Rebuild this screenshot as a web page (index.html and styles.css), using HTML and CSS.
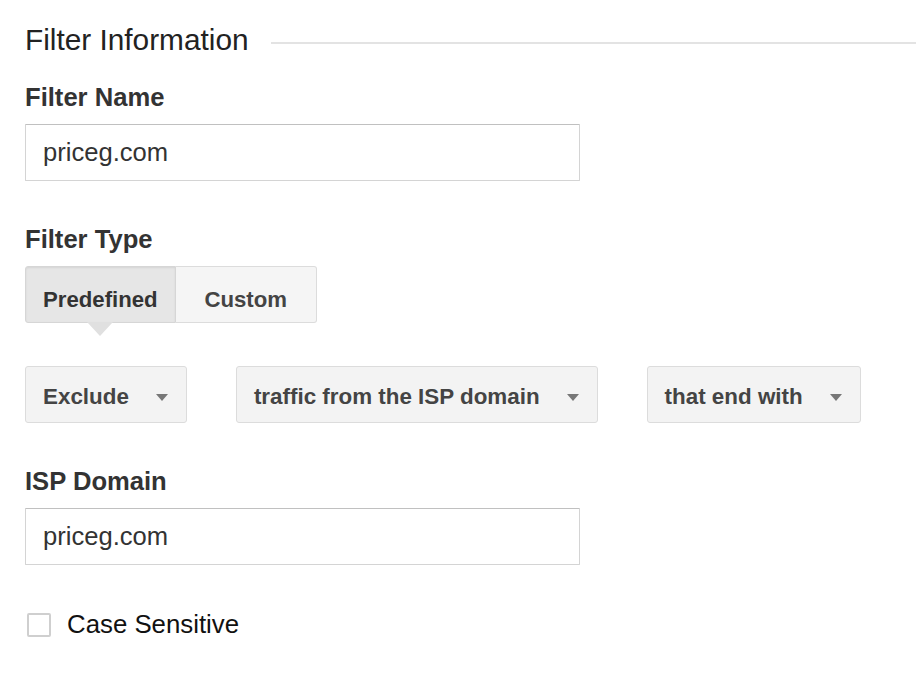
FILE: index.html
```html
<!DOCTYPE html>
<html lang="en">
<head>
    <meta charset="UTF-8">
    <meta name="viewport" content="width=device-width, initial-scale=1.0">
    <title>Filter Information</title>
    <link rel="stylesheet" href="styles.css">
</head>
<body>

    <div class="filter-form">
        <div class="section-head">
            <h1>Filter Information</h1>
            <span class="rule"></span>
        </div>

        <label class="field-label" for="filter-name">Filter Name</label>
        <input class="text-input" type="text" id="filter-name" value="priceg.com">

        <label class="field-label label-gap">Filter Type</label>
        <div class="segmented">
            <button class="seg-btn active">Predefined</button>
            <button class="seg-btn">Custom</button>
        </div>

        <div class="dropdowns">
            <button class="dropdown">Exclude <span class="caret"></span></button>
            <button class="dropdown">traffic from the ISP domain <span class="caret"></span></button>
            <button class="dropdown">that end with <span class="caret"></span></button>
        </div>

        <label class="field-label label-gap" for="isp-domain">ISP Domain</label>
        <input class="text-input" type="text" id="isp-domain" value="priceg.com">

        <label class="check-row">
            <input type="checkbox" class="check">
            Case Sensitive
        </label>
    </div>

</body>
</html>
```

FILE: styles.css
```css
body {
    font-family: "Liberation Sans", Arial, Helvetica, sans-serif;
    margin: 0;
    padding: 22px 0 0 25px;
    background-color: #fff;
    color: #333;
}
.filter-form {
    display: flex;
    flex-direction: column;
    align-items: flex-start;
}
.section-head {
    display: flex;
    align-items: center;
    align-self: stretch;
    height: 36px;
}
.section-head h1 {
    margin: 0;
    font-size: 29.8px;
    font-weight: normal;
    line-height: 36px;
    color: #222;
}
.rule {
    flex: 1;
    height: 2px;
    margin: 6px 0 0 22px;
    background-color: #e3e3e3;
}
.field-label {
    display: block;
    margin-top: 25px;
    font-size: 25.6px;
    font-weight: bold;
    line-height: 28px;
    color: #333;
}
.label-gap {
    margin-top: 44px;
}
.text-input {
    box-sizing: border-box;
    width: 555px;
    height: 57px;
    margin: 13px 0 0;
    padding: 0 17px;
    font-family: inherit;
    font-size: 25.6px;
    color: #333;
    border: 1px solid #d4d4d4;
    border-top-color: #c0c0c0;
    border-radius: 1px;
    outline: none;
}
.segmented {
    display: flex;
    margin-top: 13px;
}
.seg-btn {
    position: relative;
    box-sizing: border-box;
    height: 57px;
    min-width: 141px;
    padding: 10px 17px 0;
    font-family: inherit;
    font-size: 22.2px;
    font-weight: bold;
    color: #444;
    background-color: #f5f5f5;
    border: 1px solid #dcdcdc;
    cursor: pointer;
}
.seg-btn:first-child {
    border-radius: 3px 0 0 3px;
}
.seg-btn:last-child {
    border-left: none;
    border-radius: 0 3px 3px 0;
}
.seg-btn.active {
    color: #333;
    background-color: #e6e6e6;
    border-color: #d6d6d6;
    box-shadow: inset 0 1px 2px rgba(0, 0, 0, 0.08);
}
.seg-btn.active::after {
    content: "";
    position: absolute;
    left: 50%;
    bottom: -14px;
    margin-left: -13px;
    border-left: 13px solid transparent;
    border-right: 13px solid transparent;
    border-top: 14px solid #e0e0e0;
}
.dropdowns {
    display: flex;
    gap: 49px;
    margin-top: 43px;
}
.dropdown {
    display: flex;
    align-items: center;
    box-sizing: border-box;
    height: 57px;
    padding: 4px 18px 0 17px;
    font-family: inherit;
    font-size: 22.4px;
    font-weight: bold;
    color: #444;
    background-color: #f3f3f3;
    border: 1px solid #dcdcdc;
    border-radius: 3px;
    cursor: pointer;
}
.caret {
    width: 0;
    height: 0;
    margin-left: 27px;
    margin-top: 1px;
    border-left: 6px solid transparent;
    border-right: 6px solid transparent;
    border-top: 7px solid #777;
}
.check-row {
    display: flex;
    align-items: center;
    margin-top: 45px;
    font-size: 25.8px;
    color: #111;
}
.check {
    appearance: none;
    box-sizing: border-box;
    width: 24px;
    height: 24px;
    margin: 0 16px 0 2px;
    border: 2px solid #cfcfcf;
    border-radius: 2px;
    background-color: #fff;
}
```
